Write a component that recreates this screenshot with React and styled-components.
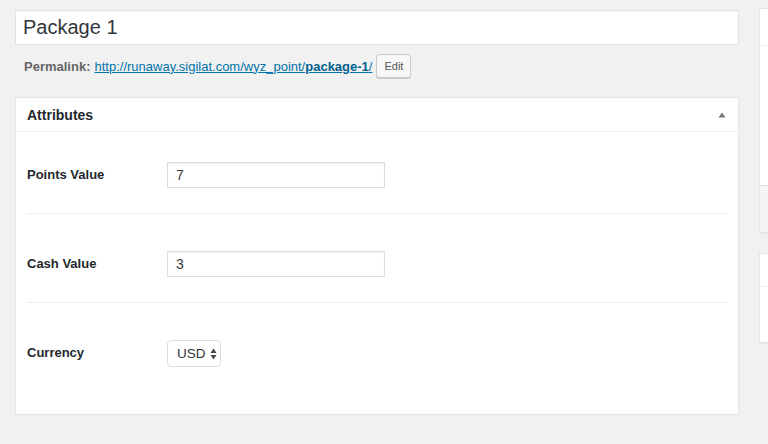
import React from 'react';
import styled, { createGlobalStyle } from 'styled-components';

const GlobalStyle = createGlobalStyle`
  html, body {
    margin: 0;
    padding: 0;
    background: #f1f1f1;
    overflow: hidden;
  }
  body {
    font-family: "Liberation Sans", Arial, sans-serif;
    color: #23282d;
  }
`;

const Page = styled.div`
  display: flex;
  align-items: flex-start;
  gap: 20px;
  padding: 10px 0 0 15px;
  overflow: hidden;
`;

const Main = styled.div`
  width: 724px;
  flex-shrink: 0;
`;

const TitleInput = styled.div`
  box-sizing: border-box;
  height: 35px;
  background: #fff;
  border: 1px solid #e2e2e2;
  box-shadow: inset 0 1px 2px rgba(0, 0, 0, 0.05);
  display: flex;
  align-items: center;
  padding: 0 7px;
  font-size: 20px;
  color: #32373c;
`;

const PermalinkRow = styled.div`
  display: flex;
  align-items: center;
  gap: 4px;
  margin-top: 9px;
  padding-left: 9px;
  font-size: 13px;
  height: 24px;
`;

const PermLabel = styled.span`
  font-weight: bold;
  color: #666;
`;

const PermLink = styled.a`
  color: #0073aa;
  text-decoration: underline;

  strong {
    color: #005f8d;
  }
`;

const SmallButton = styled.span`
  box-sizing: border-box;
  height: 24px;
  padding: 0 7px;
  display: inline-flex;
  align-items: center;
  background: #f7f7f7;
  border: 1px solid #ccc;
  border-radius: 3px;
  box-shadow: 0 1px 0 #ccc;
  color: #555;
  font-size: 11px;
`;

const Box = styled.div`
  background: #fff;
  border: 1px solid #e5e5e5;
  box-shadow: 0 1px 1px rgba(0, 0, 0, 0.04);
`;

const MetaBox = styled(Box)`
  margin-top: 19px;
`;

const BoxHeader = styled.div`
  height: 33px;
  border-bottom: 1px solid #eee;
  display: flex;
  align-items: center;
  justify-content: space-between;
  padding: 0 12px 0 11px;
  font-size: 14px;
  font-weight: bold;
  color: #23282d;
`;

const BoxBody = styled.div`
  padding: 0 11px;
`;

const FieldRow = styled.div`
  display: flex;
  align-items: center;
  padding: ${p => (p.$first ? 30 : 37)}px 0 ${p => (p.$last ? 47 : 25)}px;
  border-bottom: ${p => (p.$last ? 'none' : '1px solid #eee')};
`;

const FieldLabel = styled.div`
  width: 140px;
  font-size: 13px;
  font-weight: bold;
  color: #23282d;
  margin-top: -2px;
`;

const TextField = styled.div`
  box-sizing: border-box;
  width: 218px;
  height: 26px;
  border: 1px solid #ddd;
  box-shadow: inset 0 1px 2px rgba(0, 0, 0, 0.07);
  background: #fff;
  display: flex;
  align-items: center;
  padding: 0 8px;
  font-size: 14px;
  color: #32373c;
`;

const SelectField = styled.div`
  box-sizing: border-box;
  height: 27px;
  width: 54px;
  border: 1px solid #ddd;
  border-radius: 4px;
  background: #fff;
  display: flex;
  align-items: center;
  gap: 4px;
  padding: 0 0 0 9px;
  font-size: 13.5px;
  color: #32373c;
`;

const Sidebar = styled.div`
  flex: 1;
  min-width: 0;
  margin-top: -2px;
`;

const SideBox = styled(Box)`
  margin-bottom: 20px;
  border-right: none;
`;

const SideHeader = styled.div`
  height: ${p => p.$h}px;
  border-bottom: 1px solid #eee;
`;

const SideContent = styled.div`
  height: ${p => p.$h}px;
`;

const SideFooter = styled.div`
  height: 46px;
  background: #f5f5f5;
  border-top: 1px solid #ddd;
`;

const Toggle = () => (
  <svg width="8" height="6" viewBox="0 0 8 6">
    <path d="M4 0.5 L7.5 5.5 L0.5 5.5 Z" fill="#72777c" />
  </svg>
);

const SelectArrows = () => (
  <svg width="7" height="12" viewBox="0 0 7 12">
    <path d="M3.5 0.5 L6.5 5 L0.5 5 Z" fill="#444" />
    <path d="M3.5 11.5 L6.5 7 L0.5 7 Z" fill="#444" />
  </svg>
);

export default function App() {
  return (
    <>
      <GlobalStyle />
      <Page>
        <Main>
          <TitleInput>Package 1</TitleInput>
          <PermalinkRow>
            <PermLabel>Permalink:</PermLabel>
            <PermLink href="#">
              http://runaway.sigilat.com/wyz_point/<strong>package-1</strong>/
            </PermLink>
            <SmallButton>Edit</SmallButton>
          </PermalinkRow>

          <MetaBox>
            <BoxHeader>
              <span>Attributes</span>
              <Toggle />
            </BoxHeader>
            <BoxBody>
              <FieldRow $first>
                <FieldLabel>Points Value</FieldLabel>
                <TextField>7</TextField>
              </FieldRow>
              <FieldRow>
                <FieldLabel>Cash Value</FieldLabel>
                <TextField>3</TextField>
              </FieldRow>
              <FieldRow $last>
                <FieldLabel>Currency</FieldLabel>
                <SelectField>
                  USD <SelectArrows />
                </SelectField>
              </FieldRow>
            </BoxBody>
          </MetaBox>
        </Main>

        <Sidebar>
          <SideBox>
            <SideHeader $h={36} />
            <SideContent $h={139} />
            <SideFooter />
          </SideBox>
          <SideBox>
            <SideHeader $h={32} />
            <SideContent $h={55} />
          </SideBox>
        </Sidebar>
      </Page>
    </>
  );
}
